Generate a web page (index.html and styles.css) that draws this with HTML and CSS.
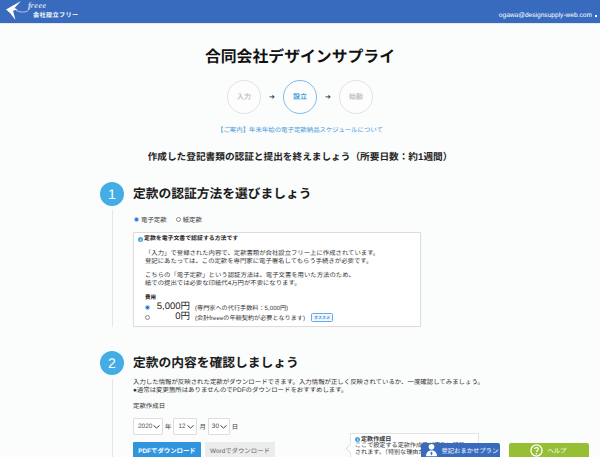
FILE: index.html
```html
<!DOCTYPE html>
<html lang="ja">
<head>
<meta charset="utf-8">
<title>会社設立フリー</title>
<link rel="stylesheet" href="styles.css">
</head>
<body>
<header class="topbar">
  <div class="brand">
    <svg class="logo" width="31" height="23" viewBox="0 0 31 23"><path d="M6 9.500 21 1 14.500 8 17.500 9.500 13 10.800 15.500 20 10 13Z" fill="#fff"/><path d="M16 10.500C20 12.500 25 12.500 27.500 11 29 10 29.500 8 30.500 5" stroke="#fff" stroke-width=".6" fill="none"/></svg>
    <div class="brand-text"><span class="brand-free">freee</span><span class="brand-name">会社設立フリー</span></div>
  </div>
  <div class="account">ogawa@designsupply-web.com <span class="caret"></span></div>
</header>
<main class="page">
  <h1 class="company">合同会社デザインサプライ</h1>
  <div class="steps">
    <div class="step">入力</div>
    <span class="arrow">➔</span>
    <div class="step step-active">設立</div>
    <span class="arrow">➔</span>
    <div class="step">始動</div>
  </div>
  <p class="notice">【ご案内】年末年始の電子定款納品スケジュールについて</p>
  <h2 class="lead">作成した登記書類の認証と提出を終えましょう（所要日数：約1週間）</h2>

  <section class="section section-one">
    <div class="section-head"><span class="num">1</span><h3>定款の認証方法を選びましょう</h3></div>
    <div class="section-body">
      <div class="radios">
        <span class="radio-item"><i class="radio on"></i>電子定款</span>
        <span class="radio-item"><i class="radio"></i>紙定款</span>
      </div>
      <div class="box">
        <p class="box-title"><i class="info">i</i>定款を電子文書で認証する方法です</p>
        <p class="box-text">「入力」で登録された内容で、定款書類が会社設立フリー上に作成されています。<br>登記にあたっては、この定款を専門家に電子署名してもらう手続きが必要です。</p>
        <p class="box-text">こちらの「電子定款」という認証方法は、電子文書を用いた方法のため、<br>紙での提出では必要な印紙代4万円が不要になります。</p>
        <p class="fee-label">費用</p>
        <div class="fee"><i class="radio on"></i><span class="price">5,000円</span><span class="fee-note">(専門家への代行手数料：5,000円)</span></div>
        <div class="fee"><i class="radio"></i><span class="price">0円</span><span class="fee-note">(会計freeeの年額契約が必要となります)</span><span class="tag">オススメ</span></div>
      </div>
    </div>
  </section>

  <section class="section section-two">
    <div class="section-head"><span class="num">2</span><h3>定款の内容を確認しましょう</h3></div>
    <div class="section-body">
      <p class="desc">入力した情報が反映された定款がダウンロードできます。入力情報が正しく反映されているか、一度確認してみましょう。<br>●通常は変更箇所はありませんのでPDFのダウンロードをおすすめします。</p>
      <p class="date-label">定款作成日</p>
      <div class="date-row">
        <span class="select select-year">2020<svg class="chev" width="7" height="4" viewBox="0 0 7 4"><path d="M.5.500 3.500 3 6.500.500" stroke="#444" fill="none"/></svg></span><span>年</span>
        <span class="select select-month">12<svg class="chev" width="7" height="4" viewBox="0 0 7 4"><path d="M.5.500 3.500 3 6.500.500" stroke="#444" fill="none"/></svg></span><span>月</span>
        <span class="select">30<svg class="chev" width="7" height="4" viewBox="0 0 7 4"><path d="M.5.500 3.500 3 6.500.500" stroke="#444" fill="none"/></svg></span><span>日</span>
      </div>
      <div class="downloads">
        <span class="btn btn-primary">PDFでダウンロード</span>
        <span class="btn btn-muted">Wordでダウンロード</span>
      </div>
    </div>
  </section>
</main>
<aside class="tip">
  <p class="tip-title"><i class="info">i</i>定款作成日</p>
  <p>ここで設定する定款作成日が定款に記載<br>されます。（特別な理由がなければ</p>
</aside>
<a class="float float-plan"><svg width="11" height="14" viewBox="0 0 14 16"><circle cx="7" cy="4" r="3.600" fill="#fff"/><path d="M0 16C0 11 3 8.500 7 8.500S14 11 14 16Z" fill="#fff"/><path d="M7 10 8.500 12 7 15 5.500 12Z" fill="#386bbe"/></svg>登記おまかせプラン</a>
<a class="float float-help"><svg width="13" height="13" viewBox="0 0 14 14"><circle cx="7" cy="7" r="6" stroke="#fff" stroke-width="1.400" fill="none"/><path d="M5 5.500C5 3.500 9 3.500 9 5.500 9 7 7 7 7 8.700" stroke="#fff" stroke-width="1.300" fill="none"/><circle cx="7" cy="10.500" r=".9" fill="#fff"/></svg>ヘルプ</a>
</body>
</html>
```
FILE: styles.css
```css
* { box-sizing: border-box; }
html, body { margin: 0; height: 457px; overflow: hidden; }
body { background: #fbfcfc; color: #222; font-family: "Liberation Sans", "Noto Sans CJK JP", sans-serif; font-size: 6.420px; position: relative; text-rendering: geometricPrecision; }
p, h1, h2, h3 { margin: 0; }
.topbar { height: 24px; background: #386bbe; color: #fff; display: flex; justify-content: space-between; align-items: center; padding: 0 3px 0 0; border-bottom: 1px solid #e6e9ee; }
.brand { display: flex; align-items: flex-start; height: 23px; }
.brand-text { display: flex; flex-direction: column; margin-left: -3px; padding-top: 2px; }
.brand-free { font-family: "Liberation Serif", serif; font-style: italic; font-size: 8px; line-height: 8px; letter-spacing: .6px; color: #fff; }
.brand-name { font-size: 6.200px; line-height: 9px; margin-top: .5px; margin-left: 5px; letter-spacing: .3px; font-weight: 700; }
.account { font-size: 6.600px; padding-top: 8px; display: flex; align-items: center; gap: 3px; }
.caret { width: 2px; height: 2px; background: #fff; display: inline-block; }
.page { display: flex; flex-direction: column; align-items: center; }
.company { font-size: 15.850px; line-height: 24px; margin-top: 22px; font-weight: 700; color: #111; }
.steps { display: flex; align-items: center; margin-top: 10px; }
.step { width: 34px; height: 34px; border-radius: 50%; border: 1px solid #e2e2e2; color: #c4c4c4; font-size: 7px; font-weight: 700; display: flex; align-items: center; justify-content: center; background: #fdfdfd; }
.step-active { border-color: #7dbcec; color: #3a9ee0; }
.arrow { width: 22px; text-align: center; font-size: 7px; color: #333; }
.notice { margin-top: 12px; font-size: 6.420px; line-height: 9px; color: #3f9bd9; }
.lead { margin-top: 16px; font-size: 9.660px; line-height: 14px; font-weight: 700; color: #222; }
.section { align-self: stretch; margin-left: 100px; }
.section-head { display: flex; align-items: center; gap: 9px; height: 25px; }
.num { width: 24px; height: 24px; border-radius: 50%; background: #43ade4; color: #fff; font-size: 14px; display: flex; align-items: center; justify-content: center; flex: none; }
.section-head h3 { font-size: 12.750px; font-weight: 700; line-height: 18px; color: #1a1a1a; }
.section-body { margin-left: 12px; padding-left: 20px; border-left: 1px solid #e6e6e6; margin-top: 4px; }
.section-one { margin-top: 16px; }
.radios { display: flex; gap: 9px; height: 22px; padding-bottom: 4px; align-items: center; padding-left: 1px; }
.radio-item { display: flex; align-items: center; gap: 1px; color: #333; }
.radio { width: 5px; height: 5px; border-radius: 50%; border: .7px solid #888; background: #fff; display: inline-block; flex: none; margin-right: 1px; }
.radio.on { background: #2a74e0; border: 1px solid #9cc2f3; }
.box { width: 288px; height: 95px; padding: 2px 3px 0 5px; border: 1px solid #dcdcdc; border-radius: 1px; background: #fff; box-shadow: 0 0 1px #e4e4e4; }
.box-title { display: flex; align-items: center; font-weight: 700; font-size: 5.900px; line-height: 9px; margin-bottom: 6px; color: #222; margin-left: -1px; }
.info { width: 5px; height: 5px; border-radius: 50%; background: #43a6dc; color: #fff; font-size: 4px; line-height: 5px; font-style: normal; text-align: center; flex: none; margin-right: 1px; }
.box-text { line-height: 7.750px; margin-bottom: 6.500px; padding-left: 6px; color: #333; font-size: 6.370px; }
.fee-label { font-weight: 700; font-size: 5.500px; line-height: 7px; margin-top: 7.500px; padding-left: 6px; }
.fee { display: flex; align-items: center; height: 10px; }
.fee .radio { margin-right: 0; margin-left: 6px; }
.price { width: 40px; text-align: right; font-size: 9.500px; color: #222; margin-right: 5px; line-height: 10px; }
.fee-note { font-size: 6.150px; color: #333; }
.tag { margin-left: 6px; border: .7px solid #66a9e8; color: #3c8fde; background: #f1f8ff; border-radius: 1.500px; font-size: 4px; padding: 1px 2px; line-height: 5px; font-weight: 700; }
.section-two { margin-top: 23px; }
.section-two .section-body { margin-top: 4px; }
.desc { line-height: 8px; color: #333; }
.date-label { margin-top: 8px; line-height: 8px; color: #333; }
.date-row { display: flex; align-items: center; gap: 2px; margin-top: 7px; height: 17px; color: #444; }
.select { height: 17px; width: 22px; padding: 0 2px 0 3px; border: 1px solid #dedede; border-radius: 1px; background: #fff; display: flex; align-items: center; justify-content: space-between; color: #555; }
.select-year { width: 30px; padding-left: 4px; }
.select-month { width: 24px; padding-left: 4px; }
.chev { flex: none; }
.downloads { display: flex; gap: 4px; margin-top: 7px; }
.btn { height: 17px; display: flex; align-items: center; justify-content: center; font-size: 6.400px; border-radius: 1px; }
.btn-primary { width: 68px; background: #3095df; color: #fff; font-weight: 700; }
.btn-muted { width: 70px; background: #ececec; color: #666; }
.tip { position: absolute; left: 350px; top: 433px; width: 129px; height: 30px; background: #fff; border: 1px solid #e2e2e2; padding: 2.500px 4px; font-size: 6.100px; line-height: 6.700px; color: #333; }
.tip-title { display: flex; align-items: center; font-weight: 700; }
.tip::before { content: ""; position: absolute; left: -4px; top: 11px; width: 6px; height: 6px; background: #fff; border-left: 1px solid #e2e2e2; border-bottom: 1px solid #e2e2e2; transform: rotate(45deg); }
.float { position: absolute; top: 443px; height: 14px; display: flex; align-items: center; color: #fff; border-radius: 2px 2px 0 0; font-size: 6.300px; white-space: nowrap; }
.float-plan { left: 421px; width: 79px; background: #386bbe; gap: 4.500px; padding-left: 5px; }
.float-help { left: 509px; width: 80px; background: #97bf36; gap: 4.500px; padding-left: 21px; }
```
